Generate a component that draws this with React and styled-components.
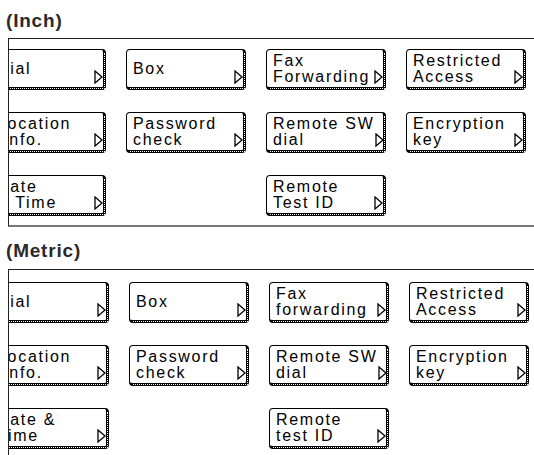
import React from "react";
import styled, { createGlobalStyle } from "styled-components";

const GlobalStyle = createGlobalStyle`
  html, body {
    margin: 0;
    padding: 0;
    background: #fff;
    overflow: hidden;
  }
`;

const Page = styled.div`
  width: 534px;
  height: 455px;
  padding: 11px 0 0 8px;
  box-sizing: border-box;
  overflow: hidden;
`;

const Section = styled.section`
  margin-top: ${(p) => p.$top || 0}px;
`;

const Heading = styled.h2`
  margin: 0 0 ${(p) => p.$gap || 7}px -2px;
  font-family: "Liberation Sans", Arial, sans-serif;
  font-weight: bold;
  font-size: 19px;
  line-height: 20px;
  letter-spacing: 0.8px;
  color: #2a2a2a;
`;

const Frame = styled.div`
  border-top: 1px solid #222;
  border-left: 1px solid #222;
  border-bottom: 2px solid #777;
  padding: ${(p) => p.$padTop || 10}px 0 9px;
  overflow: hidden;
`;

const Grid = styled.div`
  display: grid;
  grid-template-columns: repeat(4, 120px);
  grid-auto-rows: 41px;
  column-gap: 20px;
  row-gap: 22px;
  margin-left: ${(p) => p.$shift}px;
`;

const Key = styled.div`
  position: relative;
  box-sizing: border-box;
  display: flex;
  align-items: center;
  grid-column: ${(p) => p.$col};
  background: #fff;
  border: 1px solid #000;
  border-right-width: 3px;
  border-bottom-width: 3px;
  border-radius: 4px;
  padding-left: ${(p) => p.$pad}px;

  &::after {
    content: "";
    position: absolute;
    top: 3px;
    left: 3px;
    right: -2px;
    bottom: -2px;
    border-right: 1px dotted #fff;
    border-bottom: 1px dotted #fff;
    pointer-events: none;
  }
`;

const Label = styled.span`
  flex: 1;
  font-family: "Liberation Sans", Arial, sans-serif;
  font-size: 16px;
  line-height: 16px;
  letter-spacing: 1.7px;
  color: #000;
  white-space: pre;
`;

const Arrow = styled.svg`
  align-self: flex-end;
  flex: none;
  margin-bottom: 3px;
`;

const ArrowIcon = () => (
  <Arrow width="9" height="14" viewBox="0 0 9 14">
    <polygon
      points="1,1 8,7 1,13"
      fill="#fff"
      stroke="#000"
      strokeWidth="1.3"
      strokeLinejoin="miter"
    />
  </Arrow>
);

const inchKeys = [
  { col: 1, text: "Dial" },
  { col: 2, text: "Box" },
  { col: 3, text: "Fax\nForwarding" },
  { col: 4, text: "Restricted\nAccess" },
  { col: 1, text: "Location\n Info." },
  { col: 2, text: "Password\ncheck" },
  { col: 3, text: "Remote SW\ndial" },
  { col: 4, text: "Encryption\nkey" },
  { col: 1, text: "Date\n& Time" },
  { col: 3, text: "Remote\nTest ID" },
];

const metricKeys = [
  { col: 1, text: "Dial" },
  { col: 2, text: "Box" },
  { col: 3, text: "Fax\nforwarding" },
  { col: 4, text: "Restricted\nAccess" },
  { col: 1, text: "Location\n Info." },
  { col: 2, text: "Password\ncheck" },
  { col: 3, text: "Remote SW\ndial" },
  { col: 4, text: "Encryption\nkey" },
  { col: 1, text: "Date &\nTime" },
  { col: 3, text: "Remote\ntest ID" },
];

function Panel({ keys, shift, padTop, edgePad }) {
  return (
    <Frame $padTop={padTop}>
      <Grid $shift={shift}>
        {keys.map((k, i) => (
          <Key key={i} $col={k.col} $pad={k.col === 1 ? edgePad : 6}>
            <Label>{k.text}</Label>
            <ArrowIcon />
          </Key>
        ))}
      </Grid>
    </Frame>
  );
}

export default function App() {
  return (
    <>
      <GlobalStyle />
      <Page>
        <Section>
          <Heading>(Inch)</Heading>
          <Panel keys={inchKeys} shift={-23} padTop={10} edgePad={10} />
        </Section>
        <Section $top={14}>
          <Heading $gap={8}>(Metric)</Heading>
          <Panel keys={metricKeys} shift={-20} padTop={12} edgePad={7} />
        </Section>
      </Page>
    </>
  );
}
